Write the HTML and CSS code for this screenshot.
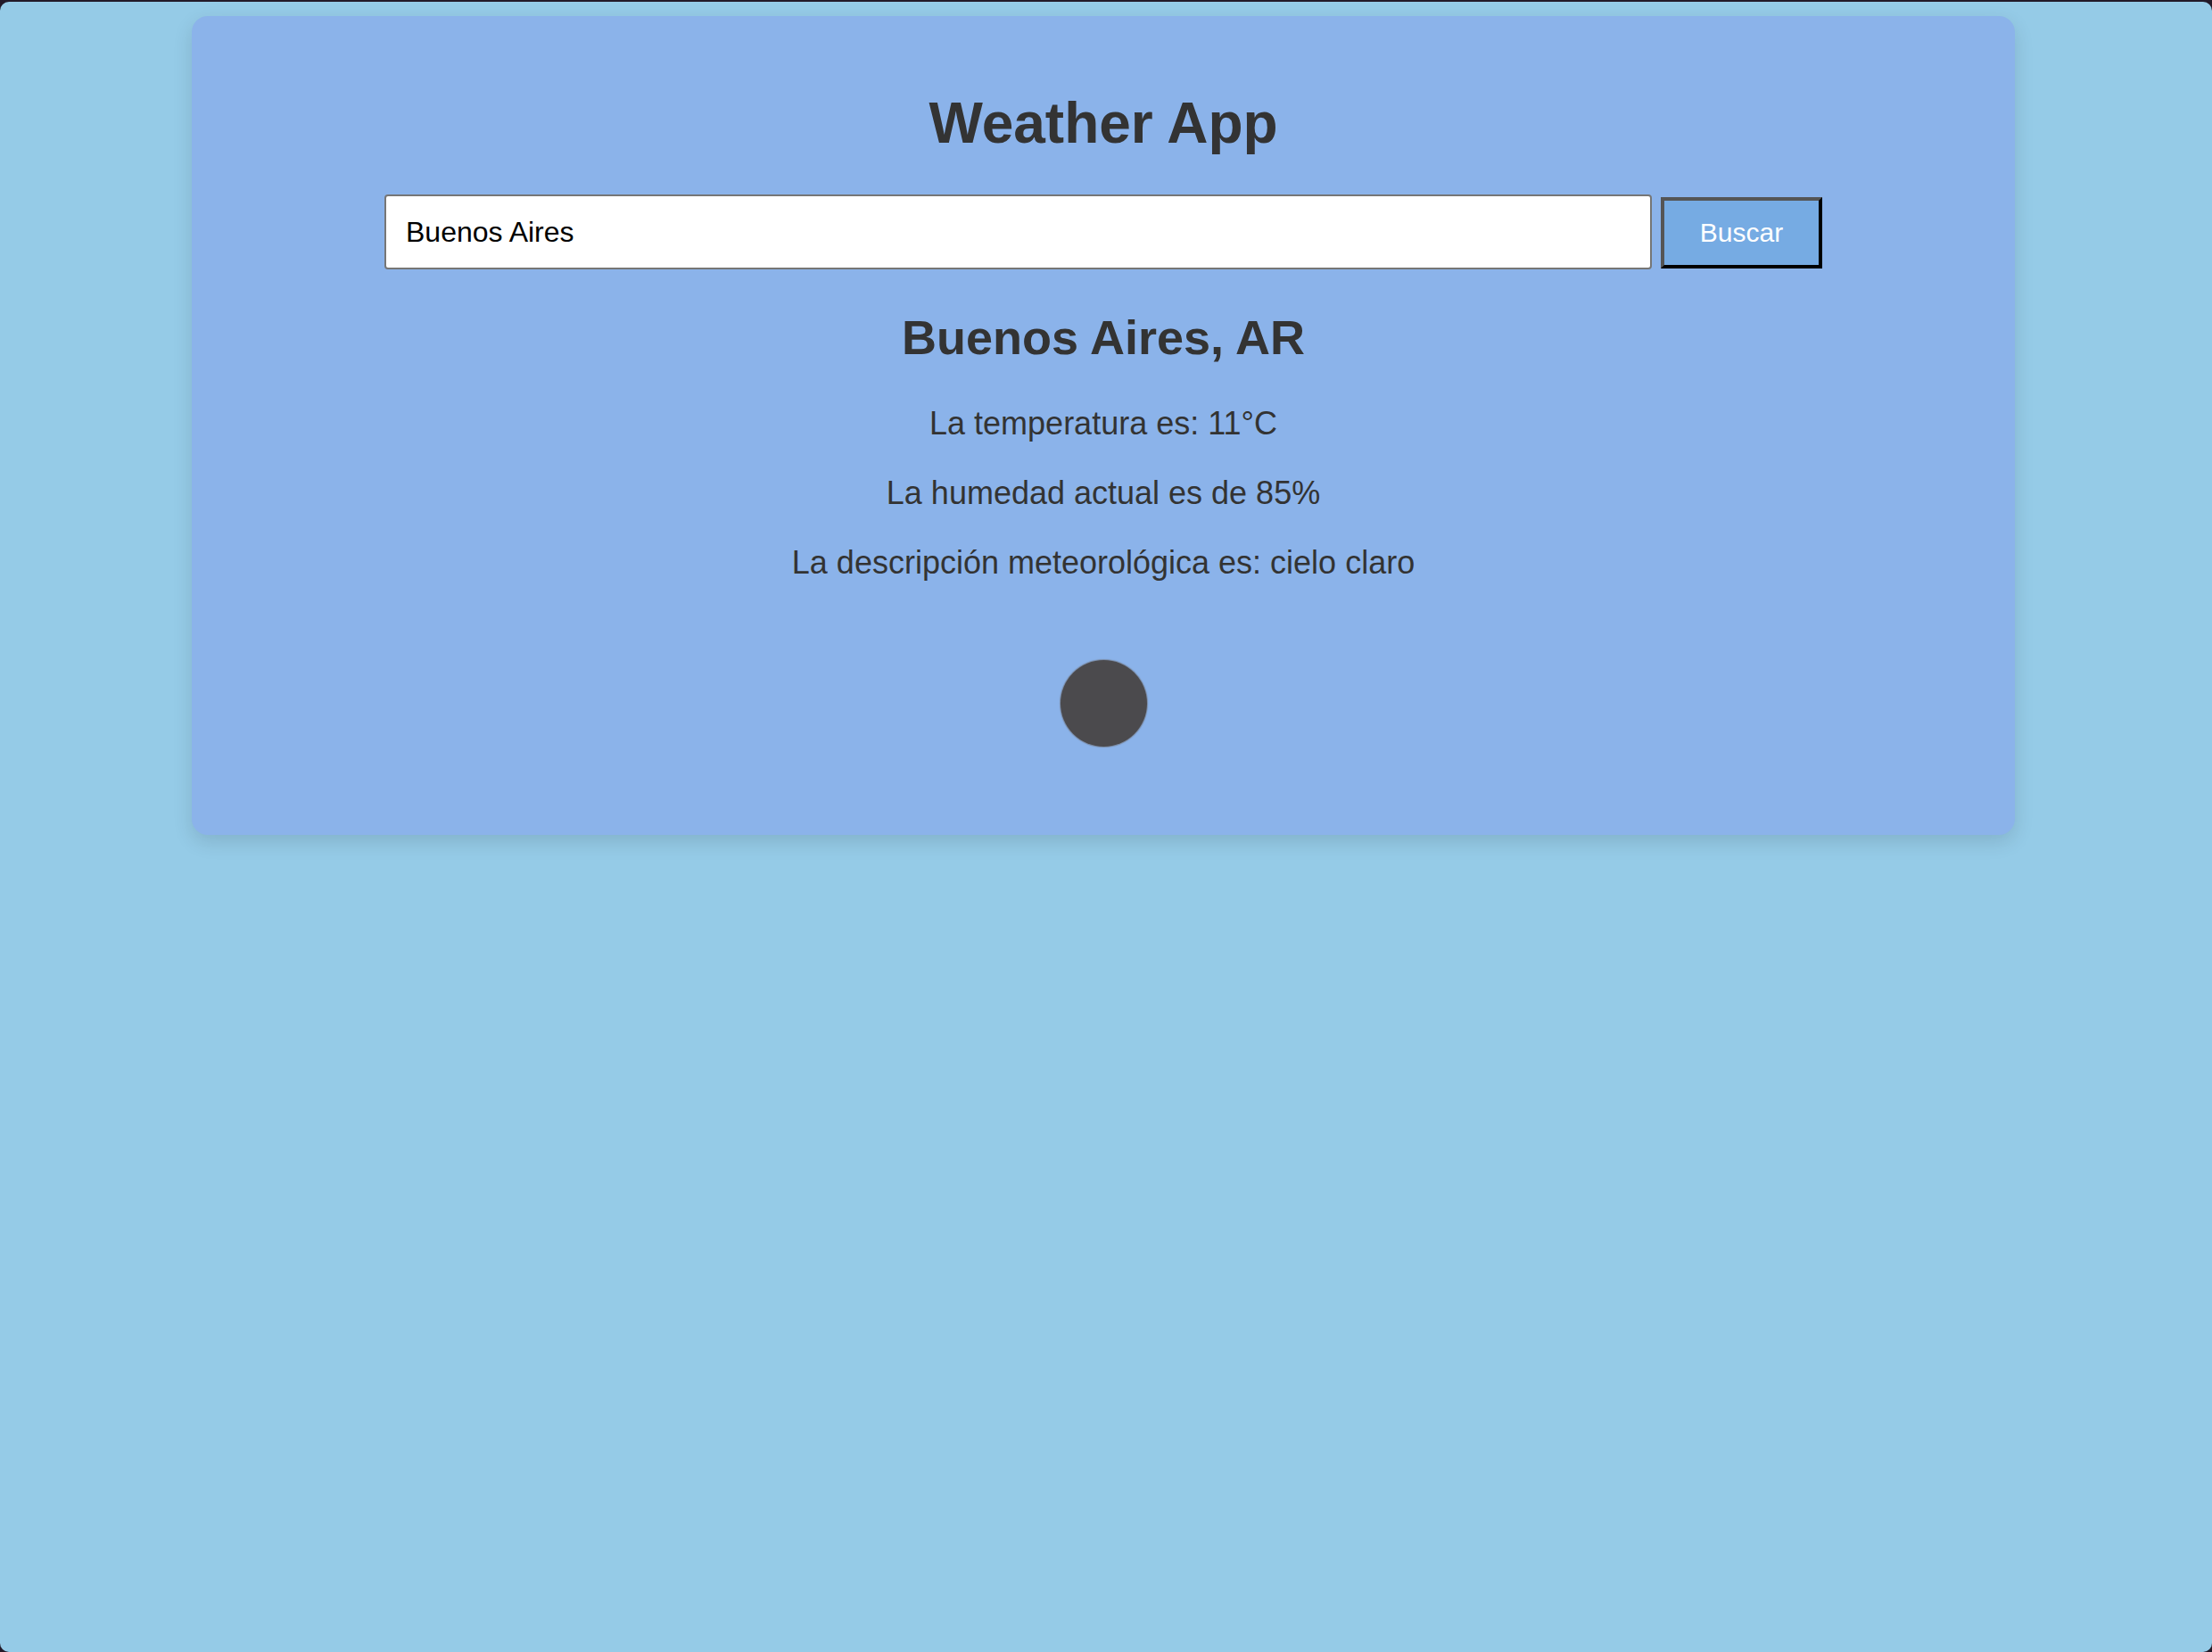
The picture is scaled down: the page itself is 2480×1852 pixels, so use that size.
FILE: index.html
```html
<!DOCTYPE html>
<html lang="es">
<head>
<meta charset="utf-8">
<title>Weather App</title>
<link rel="stylesheet" href="styles.css">
</head>
<body>
<div class="screen">
  <main class="card">
    <h1 class="title">Weather App</h1>
    <form class="search">
      <input class="search-input" type="text" value="Buenos Aires">
      <button class="search-btn" type="button">Buscar</button>
    </form>
    <h2 class="city">Buenos Aires, AR</h2>
    <p class="info">La temperatura es: 11°C</p>
    <p class="info">La humedad actual es de 85%</p>
    <p class="info">La descripción meteorológica es: cielo claro</p>
    <div class="icon-wrap"><div class="icon"></div></div>
  </main>
</div>
</body>
</html>
```

FILE: styles.css
```css
html {
  background: #231a29;
}
body {
  margin: 0;
  padding-top: 2px;
  font-family: "Liberation Sans", Arial, sans-serif;
  color: #333;
}
.screen {
  height: 1850px;
  box-sizing: border-box;
  background: #95cbe7;
  border-radius: 10px;
  padding: 16px 6px 0 0;
}
.card {
  width: 2044px;
  box-sizing: border-box;
  margin: 0 auto;
  padding: 40px 40px 40px;
  background: #8bb3ea;
  border-radius: 18px;
  box-shadow: 0 8px 22px rgba(0, 0, 0, 0.12);
  text-align: center;
}
.title {
  font-size: 64px;
  font-weight: bold;
  margin: 43px 0;
  line-height: normal;
}
.search {
  display: flex;
  justify-content: center;
  align-items: center;
  gap: 10px;
}
.search-input {
  width: 1421px;
  height: 84px;
  box-sizing: border-box;
  border: 2px solid #767676;
  border-radius: 4px;
  padding: 0 22px;
  font-family: "Liberation Sans", Arial, sans-serif;
  font-size: 32px;
  color: #000;
  background: #fff;
  outline: none;
}
.search-btn {
  width: 181px;
  height: 80px;
  box-sizing: border-box;
  border-width: 4px;
  border-style: solid;
  border-color: #555 #000 #000 #555;
  background: #76abe3;
  color: #fff;
  font-family: "Liberation Sans", Arial, sans-serif;
  font-size: 30px;
  padding: 0;
  margin-top: 2px;
}
.city {
  font-size: 54px;
  font-weight: bold;
  margin: 45px 0 45px;
}
.info {
  font-size: 36px;
  margin: 36px 0;
}
.icon-wrap {
  display: flex;
  justify-content: center;
  padding: 52px 0 59px;
}
.icon {
  width: 97px;
  height: 97px;
  border-radius: 50%;
  background: #4b4a4d;
  box-shadow: 0 0 1px 1px rgba(110, 110, 115, 0.6);
}
```
